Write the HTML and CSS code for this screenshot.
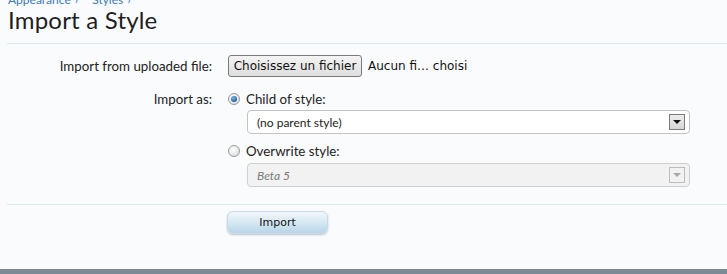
FILE: index.html
```html
<!DOCTYPE html>
<html>
<head>
<meta charset="utf-8">
<link rel="stylesheet" href="styles.css">
</head>
<body>
<div class="page">
  <div class="header">
    <div class="crumbs"><a>Appearance</a><span class="sep">›</span><a>Styles</a><span class="sep">›</span></div>
    <h1>Import a Style</h1>
  </div>
  <form class="form">
    <div class="row row-file">
      <div class="label">Import from uploaded file:</div>
      <div class="field">
        <span class="filebtn">Choisissez un fichier</span>
        <span class="filename">Aucun fi… choisi</span>
      </div>
    </div>
    <div class="row row-radio">
      <div class="label">Import as:</div>
      <div class="field">
        <span class="radio checked"></span>
        <span class="radiotext">Child of style:</span>
      </div>
    </div>
    <div class="row row-select">
      <div class="label"></div>
      <div class="field">
        <div class="select"><span>(no parent style)</span><span class="arrow"></span></div>
      </div>
    </div>
    <div class="row row-radio2">
      <div class="label"></div>
      <div class="field">
        <span class="radio"></span>
        <span class="radiotext">Overwrite style:</span>
      </div>
    </div>
    <div class="row row-select2">
      <div class="label"></div>
      <div class="field">
        <div class="select disabled"><span>Beta 5</span><span class="arrow"></span></div>
      </div>
    </div>
    <div class="submit">
      <div class="label"></div>
      <div class="field"><span class="button">Import</span></div>
    </div>
  </form>
  <div class="footer"></div>
</div>
</body>
</html>
```
FILE: styles.css
```css
html, body {
  margin: 0;
  padding: 0;
  background: #fafbfd;
  font-family: "Lato", "Liberation Sans", sans-serif;
  color: #222;
  overflow: hidden;
}
.page {
  width: 727px;
  height: 274px;
  position: relative;
  display: flow-root;
}
.header {
  display: flow-root;
  margin-left: 7px;
  border-bottom: 1px solid #dfe6ec;
  height: 43px;
}
.crumbs {
  height: 8px;
  margin-top: -4px;
  font-size: 12px;
  line-height: 8px;
  color: #3b7ab0;
  padding-left: 1px;
  white-space: nowrap;
}
.crumbs .sep {
  margin: 0 14px 0 4px;
  color: #3b7ab0;
}
h1 {
  margin: 0;
  padding: 1px 0 0 1px;
  font-size: 24px;
  font-weight: normal;
  line-height: 30px;
  color: #1f1f1f;
  letter-spacing: 0.2px;
}
.form {
  margin: 0;
}
.row, .submit {
  display: flex;
  align-items: center;
}
.label {
  width: 212px;
  flex: none;
  text-align: right;
  font-size: 13.3px;
  color: #222;
}
.field {
  margin-left: 16px;
  display: flex;
  align-items: center;
  font-size: 13.3px;
}
.row-file {
  margin-top: 11px;
  height: 22px;
}
.filebtn {
  box-sizing: border-box;
  width: 134px;
  height: 22px;
  border: 1px solid #7a7a7a;
  border-radius: 3px;
  background: linear-gradient(#f4f4f4, #dedede);
  font-family: "DejaVu Sans", sans-serif;
  font-size: 12px;
  line-height: 20px;
  text-align: center;
  color: #111;
}
.filename {
  margin-left: 6px;
  font-family: "DejaVu Sans", sans-serif;
  font-size: 12px;
  color: #111;
}
.row-radio {
  margin-top: 15px;
  height: 14px;
}
.row-radio2 {
  margin-top: 10px;
  height: 14px;
}
.radio {
  box-sizing: border-box;
  width: 12px;
  height: 12px;
  border-radius: 50%;
  border: 1px solid #9a9a9a;
  background: radial-gradient(circle at 40% 35%, #ffffff, #d8d8d8);
  position: relative;
}
.radio.checked::after {
  content: "";
  position: absolute;
  left: 2px;
  top: 2px;
  width: 6px;
  height: 6px;
  border-radius: 50%;
  background: radial-gradient(circle at 40% 35%, #7fb8ea, #1f5f9c 70%);
}
.radiotext {
  margin-left: 6px;
}
.row-select {
  margin-top: 4px;
}
.row-select2 {
  margin-top: 5px;
}
.row-select .field, .row-select2 .field {
  margin-left: 35px;
}
.select {
  box-sizing: border-box;
  width: 443px;
  height: 24px;
  border: 1px solid #c3c3c3;
  border-radius: 4px;
  background: #fff;
  display: flex;
  align-items: center;
  justify-content: space-between;
  padding: 0 4px 0 9px;
  font-size: 12px;
  color: #222;
}
.arrow {
  box-sizing: border-box;
  width: 16px;
  height: 16px;
  border: 1px solid #7c7c7c;
  background: linear-gradient(#ececec, #d6d6d6);
  position: relative;
}
.arrow::after {
  content: "";
  position: absolute;
  left: 3px;
  top: 5px;
  border-left: 4px solid transparent;
  border-right: 4px solid transparent;
  border-top: 4px solid #111;
}
.select.disabled {
  background: #f2f2f2;
  border-color: #cfcfcf;
  color: #7a7a7a;
  font-style: italic;
}
.select.disabled .arrow {
  border-color: #bdbdbd;
  background: #f2f2f2;
}
.select.disabled .arrow::after {
  border-top-color: #a8a8a8;
}
.submit {
  margin-top: 17px;
  margin-left: 7px;
  border-top: 1px solid #d6ecef;
  padding-top: 6px;
  align-items: flex-start;
}
.submit .label {
  width: 205px;
}
.submit .field {
  margin-left: 15px;
}
.button {
  box-sizing: border-box;
  width: 101px;
  height: 23px;
  border-radius: 6px;
  border: 1px solid #c9dbe8;
  background: linear-gradient(#f1f7fb, #d3e6f2 55%, #b9d5e9);
  box-shadow: 0 1px 2px rgba(60, 90, 120, 0.35);
  text-align: center;
  line-height: 21px;
  font-family: "DejaVu Sans", sans-serif;
  font-size: 11px;
  color: #111;
}
.footer {
  position: absolute;
  left: 0;
  right: 0;
  bottom: 0;
  height: 5px;
  background: #7c8a95;
}
```
